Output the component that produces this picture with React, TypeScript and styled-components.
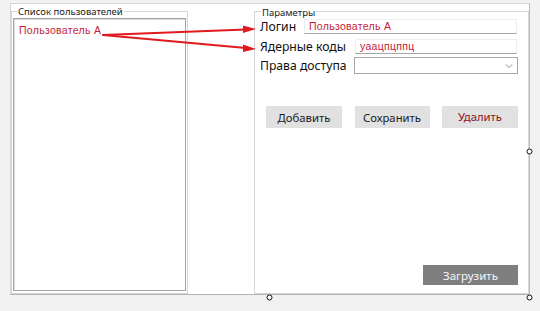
import React from "react";
import styled, { createGlobalStyle } from "styled-components";

const Global = createGlobalStyle`
  html, body { margin: 0; padding: 0; background: #f2f2f2; }
  body { width: 540px; height: 311px; overflow: hidden; font-family: "Noto Sans", "Liberation Sans", sans-serif; }
  #root { position: relative; width: 540px; height: 311px; }
`;

const Form = styled.div`
  margin: 3px 0 0 10px;
  width: 520px;
  height: 292px;
  box-sizing: border-box;
  background: #fff;
  border: 1px solid #d4d4d4;
  border-right-color: #bcbcbc;
  border-bottom-color: #b4b4b4;
  padding-top: 7px;
  display: flex;
  align-items: stretch;
`;

const Group = styled.div<{ $w: number; $ml?: number }>`
  width: ${(p) => p.$w}px;
  margin-left: ${(p) => p.$ml ?? 0}px;
  box-sizing: border-box;
  border: 1px solid #d6d6d6;
  display: flex;
  flex-direction: column;
`;

const GroupTitle = styled.div<{ $mt: number; $ml: number; $h: number }>`
  align-self: flex-start;
  margin-top: ${(p) => p.$mt}px;
  margin-left: ${(p) => p.$ml}px;
  padding: 0 1px;
  background: #fff;
  font-family: "Noto Sans", sans-serif;
  font-size: 9.5px;
  line-height: ${(p) => p.$h}px;
  color: #1a1a1a;
  white-space: nowrap;
`;

const ListBox = styled.div`
  flex: 1;
  margin: 0 1px 2px 1px;
  border: 1px solid #a3a3a3;
  box-shadow: inset 1px 1px 0 #dcdcdc;
  padding: 5px 5px;
`;

const RedText = styled.div`
  font-family: "Liberation Sans", sans-serif;
  font-size: 10.5px;
  letter-spacing: 0.3px;
  line-height: 13px;
  color: #c41c3a;
  white-space: nowrap;
`;

const Row = styled.div<{ $h: number; $mt?: number }>`
  display: flex;
  align-items: center;
  height: ${(p) => p.$h}px;
  margin-top: ${(p) => p.$mt ?? 0}px;
  padding: 0 11px 0 5px;
`;

const Label = styled.div`
  font-family: "Noto Sans", sans-serif;
  font-size: 12.2px;
  line-height: 14px;
  color: #111;
  white-space: nowrap;
`;

const TextBox = styled.div<{ $w: number }>`
  margin-left: auto;
  width: ${(p) => p.$w}px;
  height: 100%;
  box-sizing: border-box;
  border: 1px solid #ededed;
  border-bottom-color: #a8a8a8;
  display: flex;
  align-items: center;
  padding-left: 4px;
`;

const Combo = styled.div<{ $w: number }>`
  margin-left: auto;
  margin-right: -1px;
  width: ${(p) => p.$w}px;
  height: 100%;
  box-sizing: border-box;
  border: 1px solid #a9a9a9;
  display: flex;
  align-items: center;
  justify-content: flex-end;
  padding-right: 4px;
`;

const Buttons = styled.div`
  display: flex;
  justify-content: space-between;
  margin: 32px 10px 0 11px;
`;

const Button = styled.div<{ $w: number; $danger?: boolean }>`
  width: ${(p) => p.$w}px;
  height: 22px;
  background: #e1e1e1;
  display: flex;
  align-items: center;
  justify-content: center;
  font-family: "Noto Sans", sans-serif;
  font-size: 11.3px;
  color: ${(p) => (p.$danger ? "#8e1022" : "#1a1a1a")};
  padding-bottom: ${(p) => (p.$danger ? 2 : 0)}px;
  box-sizing: border-box;
`;

const Footer = styled.div`
  margin-top: auto;
  display: flex;
  justify-content: flex-end;
  padding: 0 10px 8px 0;
`;

const DarkButton = styled.div`
  width: 95px;
  height: 20px;
  background: #7f7f7f;
  display: flex;
  align-items: center;
  justify-content: center;
  font-family: "Noto Sans", sans-serif;
  font-size: 11.5px;
  color: #f4f4f4;
`;

const Overlay = styled.svg`
  position: absolute;
  left: 0;
  top: 0;
  pointer-events: none;
`;

const Chevron = () => (
  <svg width="8" height="6" viewBox="0 0 8 6">
    <path d="M1 1.5 L4 4.5 L7 1.5" fill="none" stroke="#888" strokeWidth="1" />
  </svg>
);

export default function App() {
  return (
    <>
      <Global />
      <Form>
        <Group $w={177}>
          <GroupTitle $mt={-6} $ml={5} $h={12}>Список пользователей</GroupTitle>
          <ListBox>
            <RedText>Пользователь А</RedText>
          </ListBox>
        </Group>
        <Group $w={275} $ml={66}>
          <GroupTitle $mt={-5} $ml={6} $h={11}>Параметры</GroupTitle>
          <Row $h={15} $mt={1}>
            <Label>Логин</Label>
            <TextBox $w={213}>
              <RedText>Пользователь А</RedText>
            </TextBox>
          </Row>
          <Row $h={15} $mt={5}>
            <Label>Ядерные коды</Label>
            <TextBox $w={162}>
              <RedText>уаацпцппц</RedText>
            </TextBox>
          </Row>
          <Row $h={17} $mt={3}>
            <Label>Права доступа</Label>
            <Combo $w={164}>
              <Chevron />
            </Combo>
          </Row>
          <Buttons>
            <Button $w={76}>Добавить</Button>
            <Button $w={75}>Сохранить</Button>
            <Button $w={76} $danger>Удалить</Button>
          </Buttons>
          <Footer>
            <DarkButton>Загрузить</DarkButton>
          </Footer>
        </Group>
      </Form>
      <Overlay width="540" height="311" viewBox="0 0 540 311">
        <g stroke="#e01a1e" strokeWidth="2" strokeLinecap="round" fill="none">
          <line x1="103" y1="32" x2="246" y2="26.5" />
          <line x1="103" y1="32" x2="246" y2="45" />
        </g>
        <g fill="#e01a1e">
          <polygon points="256,26 243,22.5 243,30" />
          <polygon points="256,46 243,41.5 243,49" />
        </g>
        <g fill="#fff" stroke="#111" strokeWidth="1">
          <circle cx="529.5" cy="148.5" r="2.5" />
          <circle cx="269.5" cy="294.5" r="2.5" />
          <circle cx="529.5" cy="294.5" r="2.5" />
        </g>
      </Overlay>
    </>
  );
}
